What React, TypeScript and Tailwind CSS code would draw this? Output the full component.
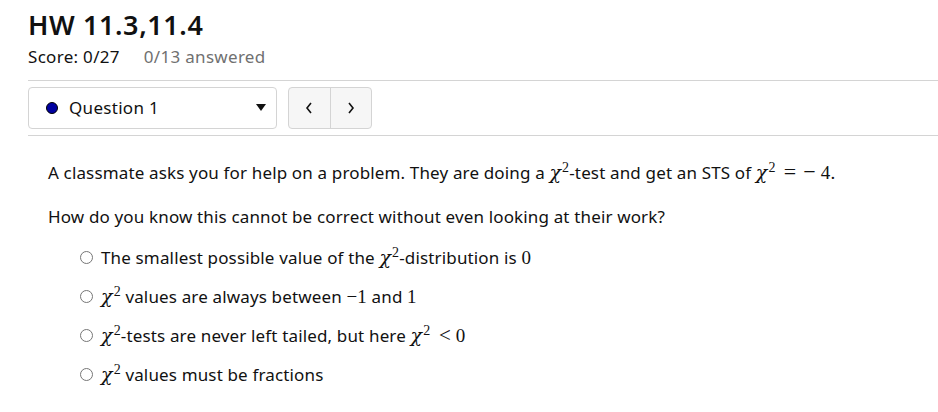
import React from 'react'

const Chi = () => (
  <span className="font-['DejaVu_Serif',serif] text-[19px] leading-none">
    <i>χ</i>
    <sup className="font-['Liberation_Serif',serif] text-[14px] -top-[7px] ml-[1px]">2</sup>
  </span>
)

const M = ({ children }: { children: React.ReactNode }) => (
  <span className="font-['Liberation_Serif',serif] text-[19px]">{children}</span>
)

const options: React.ReactNode[] = [
  <>The smallest possible value of the <Chi />-distribution is <M>0</M></>,
  <><Chi /> values are always between <M>−1</M> and <M>1</M></>,
  <><Chi />-tests are never left tailed, but here <Chi /> <M><span className="ml-[4px] text-[21px]">&lt;</span> 0</M></>,
  <><Chi /> values must be fractions</>,
]

export default function App() {
  return (
    <div className="w-[938px] h-[412px] bg-white text-[#111] font-['Noto_Sans',sans-serif] overflow-hidden">
      <div className="pl-[28px]">
        <h1 className="pt-[8px] text-[27px] font-semibold leading-[34px] tracking-[0.6px]">HW 11.3,11.4</h1>
        <div className="mt-[4px] flex text-[17px] leading-[22px] tracking-[0.3px]">
          <span>Score: 0/27</span>
          <span className="ml-[24px] text-[#707070]">0/13 answered</span>
        </div>
        <div className="mt-[12px] border-t border-[#d4d4d4]" />
        <div className="flex items-center gap-[11px] py-[6px]">
          <div className="w-[249px] h-[42px] border border-[#d4d4d4] rounded-[4px] flex items-center pl-[17px] pr-[10px]">
            <span className="w-[12px] h-[12px] rounded-full bg-[#0000a0] border border-black" />
            <span className="ml-[11px] text-[17px] tracking-[0.3px]">Question 1</span>
            <span className="ml-auto">
              <svg width="10" height="8" viewBox="0 0 10 8"><path d="M0 0h10L5 7z" fill="#111" /></svg>
            </span>
          </div>
          <div className="h-[42px] w-[84px] flex border border-[#d4d4d4] rounded-[4px] bg-[#f6f6f6]">
            <div className="flex-1 flex items-center justify-center border-r border-[#d4d4d4]">
              <svg width="8" height="12" viewBox="0 0 8 12"><path d="M6 1L2 6l4 5" fill="none" stroke="#111" strokeWidth="1.6" /></svg>
            </div>
            <div className="flex-1 flex items-center justify-center">
              <svg width="8" height="12" viewBox="0 0 8 12"><path d="M2 1l4 5-4 5" fill="none" stroke="#111" strokeWidth="1.6" /></svg>
            </div>
          </div>
        </div>
        <div className="border-t border-[#d4d4d4]" />
      </div>
      <div className="pl-[48px] pt-[22px] text-[17px] tracking-[0.15px]">
        <p className="leading-[28px]">
          A classmate asks you for help on a problem. They are doing a <Chi />-test and get an STS of <Chi />
          <M>
            <span className="ml-[8px] text-[22px]">=</span>
            <span className="ml-[7px] text-[22px]">−</span>
            <span className="ml-[5px]">4.</span>
          </M>
        </p>
        <p className="mt-[16px] leading-[28px]">How do you know this cannot be correct without even looking at their work?</p>
        <ul className="mt-[7px] pl-[32px]">
          {options.map((o, i) => (
            <li key={i} className="flex items-center h-[39px]">
              <span className="w-[13px] h-[13px] rounded-full border border-[#767676] mr-[8px] shrink-0" />
              <span className="leading-[28px]">{o}</span>
            </li>
          ))}
        </ul>
      </div>
    </div>
  )
}
